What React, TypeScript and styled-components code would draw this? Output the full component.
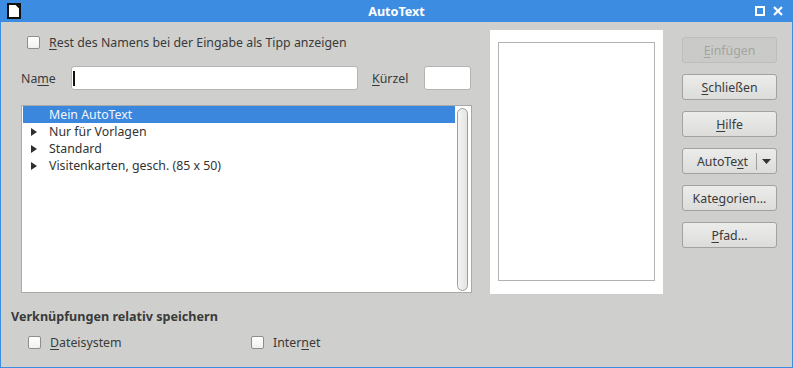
import React from 'react';
import styled, { createGlobalStyle } from 'styled-components';

const Global = createGlobalStyle`
  html, body { margin: 0; padding: 0; background: #cfd0cd; }
  body {
    font-family: "Noto Sans", "DejaVu Sans", sans-serif;
    font-size: 12.35px;
    color: #3a3a3a;
  }
`;

const Window = styled.div`
  width: 793px;
  height: 368px;
  display: flex;
  flex-direction: column;
  overflow: hidden;
  background: #cfd0cd;
`;

const TitleBar = styled.div`
  height: 22px;
  flex: none;
  background: #3c8ce1;
  display: grid;
  grid-template-columns: 1fr auto 1fr;
  align-items: center;
`;

const Logo = styled.div`
  padding-left: 7px;
  display: flex;
  align-items: center;
`;

const Title = styled.div`
  color: #ffffff;
  font-weight: 700;
  font-size: 12.6px;
`;

const Controls = styled.div`
  display: flex;
  justify-content: flex-end;
  align-items: center;
  gap: 8px;
  padding-right: 10px;
`;

const Body = styled.div`
  flex: 1;
  display: flex;
  flex-direction: column;
  border: 1px solid #3c8ce1;
  border-top: none;
`;

const TopRow = styled.div`
  display: flex;
  padding-top: 8px;
`;

const LeftCol = styled.div`
  margin-left: 20px;
  width: 451px;
  display: flex;
  flex-direction: column;
`;

const CheckRow = styled.label<{ $indent: number; $top: number }>`
  display: flex;
  align-items: center;
  gap: 9px;
  height: 18px;
  padding-left: ${(p) => p.$indent}px;
  margin-top: ${(p) => p.$top}px;
  white-space: nowrap;
`;

const Box = styled.span`
  width: 13px;
  height: 13px;
  box-sizing: border-box;
  border: 1px solid #8e8f8c;
  border-radius: 2px;
  background: linear-gradient(#ffffff, #f1f1f0);
  flex: none;
`;

const Mn = styled.span`
  text-decoration: underline;
  text-underline-offset: 2px;
  text-decoration-thickness: 1px;
`;

const NameRow = styled.div`
  display: flex;
  align-items: center;
  height: 24px;
  margin-top: 15px;
`;

const FieldLabel = styled.span<{ $w: number; $gap?: number }>`
  width: ${(p) => p.$w}px;
  margin-left: ${(p) => p.$gap ?? 0}px;
  flex: none;
`;

const Field = styled.div<{ $w: number }>`
  height: 24px;
  box-sizing: border-box;
  width: ${(p) => p.$w}px;
  flex: none;
  background: #ffffff;
  border: 1px solid #b4b5b2;
  border-radius: 3px;
  display: flex;
  align-items: center;
  padding-left: 1px;
`;

const Caret = styled.span`
  width: 2px;
  height: 15px;
  background: #111;
`;

const ListBox = styled.div`
  margin-top: 15px;
  height: 188px;
  box-sizing: border-box;
  border: 1px solid #aaaba8;
  background: #ffffff;
  display: flex;
  padding: 0 3px 0 1px;
`;

const Rows = styled.div`
  flex: 1;
  display: flex;
  flex-direction: column;
`;

const Row = styled.div<{ $selected?: boolean }>`
  height: 17px;
  display: flex;
  align-items: center;
  padding-left: 8px;
  background: ${(p) => (p.$selected ? '#3a87dd' : 'transparent')};
  color: ${(p) => (p.$selected ? '#f3f6fb' : '#333333')};
  white-space: nowrap;
`;

const Expander = styled.span`
  width: 18px;
  flex: none;
  display: flex;
  align-items: center;
`;

const ScrollTrack = styled.div`
  width: 11px;
  margin: 2px 0 1px 2px;
  box-sizing: border-box;
  border: 1px solid #9c9d9a;
  border-radius: 6px;
  background: linear-gradient(90deg, #f4f4f3, #e4e4e2);
`;

const Preview = styled.div`
  margin-left: 18px;
  width: 173px;
  height: 264px;
  box-sizing: border-box;
  background: #ffffff;
  padding: 12px 8px 13px 8px;
  display: flex;
`;

const PreviewFrame = styled.div`
  flex: 1;
  border: 1px solid #b2b2b0;
`;

const ButtonCol = styled.div`
  margin-left: 19px;
  margin-top: 7px;
  width: 95px;
  display: flex;
  flex-direction: column;
  gap: 11px;
`;

const Button = styled.div<{ $disabled?: boolean }>`
  height: 26px;
  box-sizing: border-box;
  border: 1px solid ${(p) => (p.$disabled ? '#bdbebb' : '#a2a3a0')};
  border-radius: 3px;
  background: ${(p) =>
    p.$disabled ? '#cacbc8' : 'linear-gradient(#ececeb, #dcdcda)'};
  color: ${(p) => (p.$disabled ? '#a3a4a1' : '#3a3a3a')};
  display: flex;
  align-items: center;
  justify-content: center;
  white-space: nowrap;
`;

const SplitText = styled.span`
  flex: 1;
  text-align: center;
  padding-left: 6px;
`;

const SplitSep = styled.span`
  width: 1px;
  height: 17px;
  background: #9e9f9c;
  flex: none;
`;

const SplitArrow = styled.span`
  width: 19px;
  flex: none;
  display: flex;
  justify-content: center;
  align-items: center;
`;

const Heading = styled.div`
  margin: 13px 0 0 10px;
  height: 18px;
  display: flex;
  align-items: center;
  font-weight: 700;
  font-size: 12.6px;
  color: #3a3a3a;
`;

const OptionGrid = styled.div`
  display: grid;
  grid-template-columns: 223px auto;
  margin-top: 8px;
  padding-left: 27px;
`;

const Triangle = () => (
  <svg width="6" height="8" viewBox="0 0 6 8">
    <path d="M0 0 L6 4 L0 8 Z" fill="#2e2e2e" />
  </svg>
);

const AppLogo = () => (
  <svg width="14" height="16" viewBox="0 0 14 16">
    <path d="M1 1 H9 L13 5 V15 H1 Z" fill="#ffffff" stroke="#111" strokeWidth="2" />
    <path d="M8 0 H14 V6 Z" fill="#111" />
  </svg>
);

const MaxIcon = () => (
  <svg width="10" height="10" viewBox="0 0 10 10">
    <rect x="1" y="1" width="8" height="8" fill="none" stroke="#fff" strokeWidth="2" />
  </svg>
);

const CloseIcon = () => (
  <svg width="10" height="10" viewBox="0 0 10 10">
    <path d="M1 1 L9 9 M9 1 L1 9" stroke="#fff" strokeWidth="2.2" />
  </svg>
);

const DownArrow = () => (
  <svg width="9" height="5" viewBox="0 0 9 5">
    <path d="M0 0 H9 L4.5 5 Z" fill="#333" />
  </svg>
);

const rows = [
  { label: 'Mein AutoText', selected: true, expandable: false },
  { label: 'Nur für Vorlagen', expandable: true },
  { label: 'Standard', expandable: true },
  { label: 'Visitenkarten, gesch. (85 x 50)', expandable: true },
];

export default function App() {
  return (
    <>
      <Global />
      <Window>
        <TitleBar>
          <Logo>
            <AppLogo />
          </Logo>
          <Title>AutoText</Title>
          <Controls>
            <MaxIcon />
            <CloseIcon />
          </Controls>
        </TitleBar>
        <Body>
          <TopRow>
            <LeftCol>
              <CheckRow $indent={6} $top={3}>
                <Box />
                <span>
                  <Mn>R</Mn>est des Namens bei der Eingabe als Tipp anzeigen
                </span>
              </CheckRow>
              <NameRow>
                <FieldLabel $w={50}>
                  Na<Mn>m</Mn>e
                </FieldLabel>
                <Field $w={287}>
                  <Caret />
                </Field>
                <FieldLabel $w={52} $gap={14}>
                  <Mn>K</Mn>ürzel
                </FieldLabel>
                <Field $w={47} />
              </NameRow>
              <ListBox>
                <Rows>
                  {rows.map((r) => (
                    <Row key={r.label} $selected={r.selected}>
                      <Expander>{r.expandable ? <Triangle /> : null}</Expander>
                      {r.label}
                    </Row>
                  ))}
                </Rows>
                <ScrollTrack />
              </ListBox>
            </LeftCol>
            <Preview>
              <PreviewFrame />
            </Preview>
            <ButtonCol>
              <Button $disabled>
                <span>
                  <Mn>E</Mn>infügen
                </span>
              </Button>
              <Button>
                <span>
                  <Mn>S</Mn>chließen
                </span>
              </Button>
              <Button>
                <span>
                  <Mn>H</Mn>ilfe
                </span>
              </Button>
              <Button>
                <SplitText>
                  AutoTe<Mn>x</Mn>t
                </SplitText>
                <SplitSep />
                <SplitArrow>
                  <DownArrow />
                </SplitArrow>
              </Button>
              <Button>
                <span>
                  Kate<Mn>g</Mn>orien...
                </span>
              </Button>
              <Button>
                <span>
                  <Mn>P</Mn>fad...
                </span>
              </Button>
            </ButtonCol>
          </TopRow>
          <Heading>Verknüpfungen relativ speichern</Heading>
          <OptionGrid>
            <CheckRow $indent={0} $top={0}>
              <Box />
              <span>
                <Mn>D</Mn>ateisystem
              </span>
            </CheckRow>
            <CheckRow $indent={0} $top={0}>
              <Box />
              <span>
                Inter<Mn>n</Mn>et
              </span>
            </CheckRow>
          </OptionGrid>
        </Body>
      </Window>
    </>
  );
}
